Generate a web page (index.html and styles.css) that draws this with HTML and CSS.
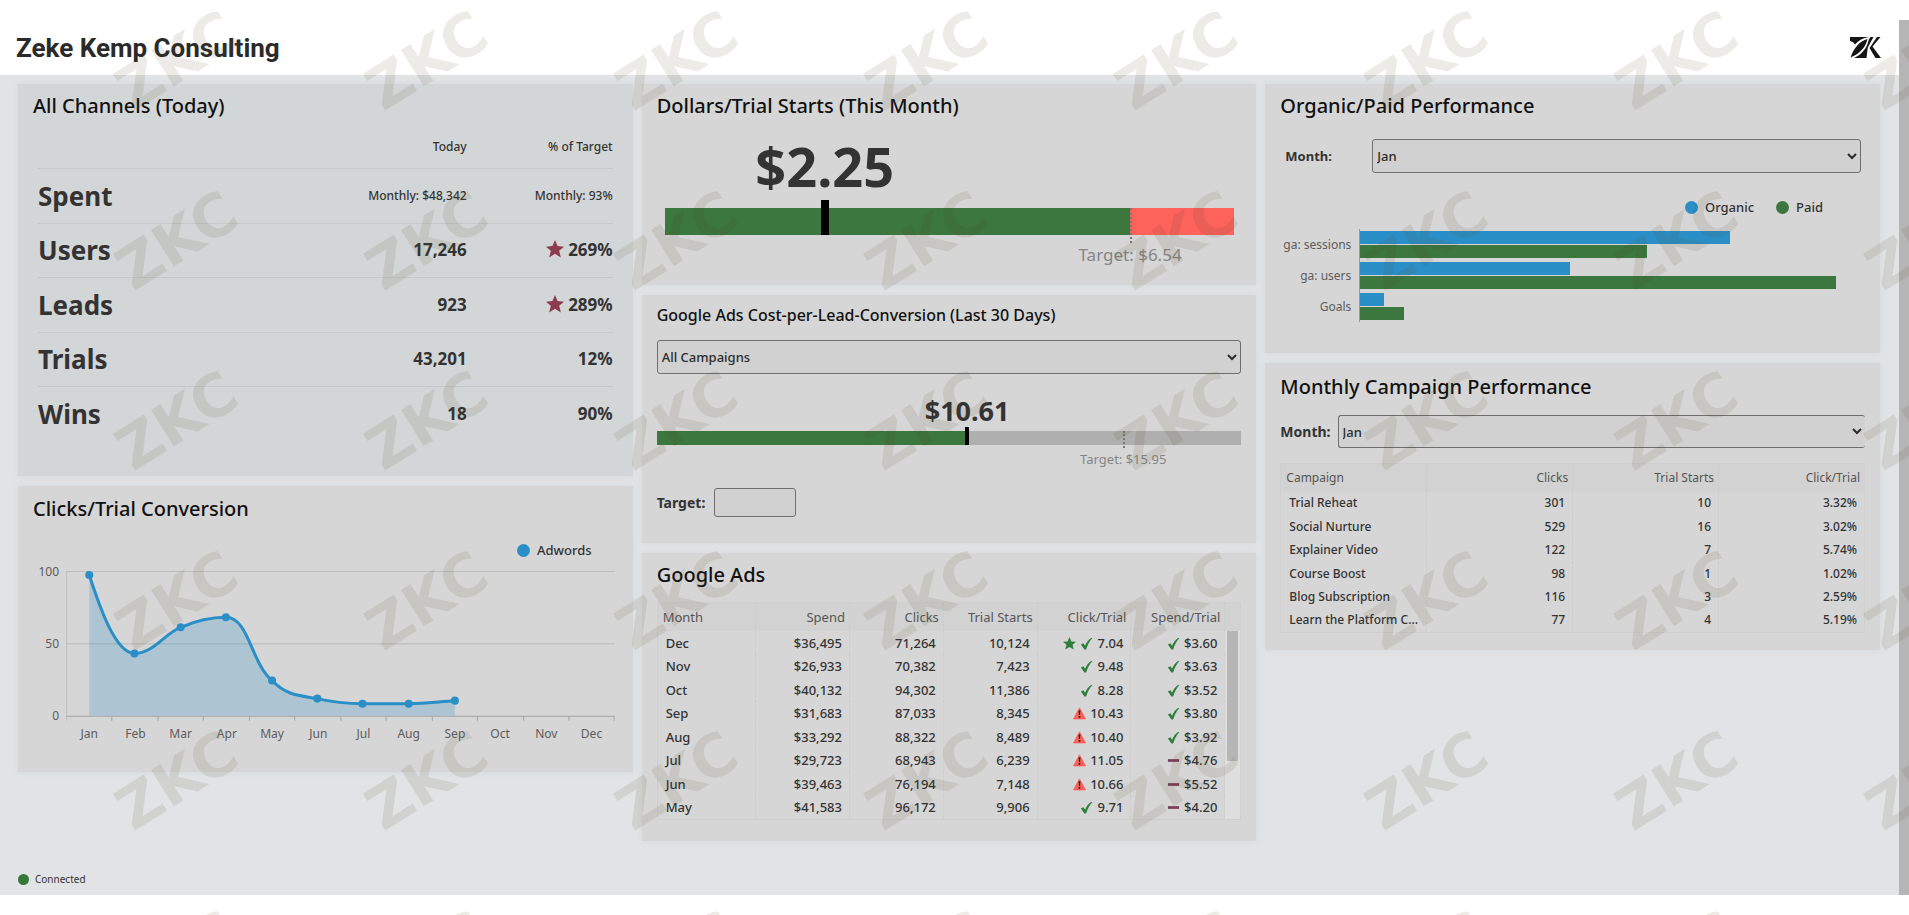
FILE: index.html
```html
<!DOCTYPE html>
<html lang="en">
<head>
  <meta charset="UTF-8" />
  <meta name="viewport" content="width=device-width, initial-scale=1" />
  <title>Zeke Kemp Consulting</title>
  <link rel="stylesheet" href="styles.css">
</head>
<body>

  <!-- shared icons -->
  <svg class="sprite" aria-hidden="true">
    <symbol id="star" viewBox="0 0 16 16">
      <path d="M8 0l2.300 5.400 5.700.5-4.300 3.700 1.500 5.900L8 12.300l-5.200 3.200 1.500-5.900L0 5.900l5.700-.5z"/>
    </symbol>
    <symbol id="check" viewBox="0 0 14 14">
      <path d="M1 8.2l2.6-1.4 1.9 2.6C7 5.600 9.200 2.600 12.400.8l.8.600C10.300 4.600 8.100 8.600 6.600 13.400H4.700z"/>
    </symbol>
    <symbol id="warn" viewBox="0 0 14 14">
      <path d="M7 1L13.400 12.800H.6z" fill="#f8605a" stroke="#f8605a" stroke-linejoin="round"/>
      <path d="M6 3.600h2l-.4 5H6.400zM6.100 9.800h1.800v1.800H6.100z" fill="#3c1c1c"/>
    </symbol>
    <symbol id="dash" viewBox="0 0 14 14">
      <path d="M1 5.500h12v3H1z"/>
    </symbol>
  </svg>

  <header class="topbar">
    <h1>Zeke Kemp Consulting</h1>
    <svg class="logo" viewBox="0 0 31 21" role="img" aria-label="ZK">
      <path d="M0 0h19C13 .8 8.500 3.500 5 7.500 3.800 5.500 2 4.300 0 4z"/>
      <path d="M17.500 2C9.500 4 3.500 11.500 .5 20.500 9 17 15.500 11 17.500 2z"/>
      <path d="M4 21C11.500 17.500 17 11.500 18.800 2.500L20.500 0H23.500L17.800 10.500 16.500 21z"/>
      <path d="M27 0H30.500L22.500 9.500 31 21H25.500L19.500 11z"/>
    </svg>
  </header>

  <main class="board">
    <div class="columns">

      <div class="column">
        <section class="card channels-card">
          <h2>All Channels (Today)</h2>
          <table class="channels">
            <thead>
              <tr><th></th><th>Today</th><th>% of Target</th></tr>
            </thead>
            <tbody>
              <tr class="small"><th>Spent</th><td>Monthly: $48,342</td><td>Monthly: 93%</td></tr>
              <tr><th>Users</th><td>17,246</td><td><svg class="star-red"><use href="#star"/></svg> 269%</td></tr>
              <tr><th>Leads</th><td>923</td><td><svg class="star-red"><use href="#star"/></svg> 289%</td></tr>
              <tr><th>Trials</th><td>43,201</td><td>12%</td></tr>
              <tr><th>Wins</th><td>18</td><td>90%</td></tr>
            </tbody>
          </table>
        </section>

        <section class="card clicks-card">
          <h2>Clicks/Trial Conversion</h2>
          <div class="legend">
            <span class="key blue">Adwords</span>
          </div>
          <svg class="line-chart" viewBox="0 0 582 180">
            <g stroke="#bdbfbf">
              <path d="M33 11.500h546M33 83.500h546M33.500 11v149"/>
            </g>
            <path d="M56 15C66 46 82 93 101 93C120 93 131 73 147 67C161 61 177 57 192 57C215 57 217 103 238 120C252 135 266 135 283 138C300 142 312 143 328 143H374C389 143 404 141 420 140V155H56z" fill="#2a8fc7" fill-opacity=".24"/>
            <path d="M33 155.500h546M78.500 155v5M124.500 155v5M169.500 155v5M215.500 155v5M260.500 155v5M306.500 155v5M351.500 155v5M397.500 155v5M442.500 155v5M488.500 155v5M533.500 155v5M578.500 155v5" stroke="#a2a5a5"/>
            <path d="M56 15C66 46 82 93 101 93C120 93 131 73 147 67C161 61 177 57 192 57C215 57 217 103 238 120C252 135 266 135 283 138C300 142 312 143 328 143H374C389 143 404 141 420 140" fill="none" stroke="#2a8fc7" stroke-width="3"/>
            <g fill="#2a8fc7">
              <circle cx="56" cy="15" r="4"/><circle cx="101" cy="93" r="4"/><circle cx="147" cy="67" r="4"/>
              <circle cx="192" cy="57" r="4"/><circle cx="238" cy="120" r="4"/><circle cx="283" cy="138" r="4"/>
              <circle cx="328" cy="143" r="4"/><circle cx="374" cy="143" r="4"/><circle cx="420" cy="140" r="4"/>
            </g>
            <g class="axis" text-anchor="end">
              <text x="26" y="16">100</text><text x="26" y="88">50</text><text x="26" y="159">0</text>
            </g>
            <g class="axis" text-anchor="middle">
              <text x="56" y="177">Jan</text><text x="102" y="177">Feb</text><text x="147" y="177">Mar</text>
              <text x="193" y="177">Apr</text><text x="238" y="177">May</text><text x="284" y="177">Jun</text>
              <text x="329" y="177">Jul</text><text x="374" y="177">Aug</text><text x="420" y="177">Sep</text>
              <text x="465" y="177">Oct</text><text x="511" y="177">Nov</text><text x="556" y="177">Dec</text>
            </g>
          </svg>
        </section>
      </div>

      <div class="column">
        <section class="card dollars-card">
          <h2>Dollars/Trial Starts (This Month)</h2>
          <div class="gauge big">
            <div class="gauge-value"><span style="left:28.1%">$2.25</span></div>
            <div class="gauge-bar over">
              <div class="fill" style="width:81.7%"></div>
              <div class="marker" style="left:28.1%"></div>
              <div class="goal" style="left:81.7%"></div>
            </div>
            <div class="gauge-target"><span style="left:81.7%">Target: $6.54</span></div>
          </div>
        </section>

        <section class="card cost-card">
          <h3>Google Ads Cost-per-Lead-Conversion (Last 30 Days)</h3>
          <select class="wide" aria-label="Campaign">
            <option>All Campaigns</option>
          </select>
          <div class="gauge">
            <div class="gauge-value"><span style="left:53.1%">$10.61</span></div>
            <div class="gauge-bar">
              <div class="fill" style="width:53.1%"></div>
              <div class="marker" style="left:53.1%"></div>
              <div class="goal" style="left:79.8%"></div>
            </div>
            <div class="gauge-target"><span style="left:79.8%">Target: $15.95</span></div>
          </div>
          <div class="field target-field">
            <label for="target">Target:</label>
            <input type="text" id="target">
          </div>
        </section>

        <section class="card ads-card">
          <h2>Google Ads</h2>
          <div class="table-scroll">
            <table class="data">
              <thead>
                <tr><th>Month</th><th>Spend</th><th>Clicks</th><th>Trial Starts</th><th>Click/Trial</th><th>Spend/Trial</th></tr>
              </thead>
              <tbody>
                <tr><td>Dec</td><td>$36,495</td><td>71,264</td><td>10,124</td><td><svg class="good"><use href="#star"/></svg> <svg class="good"><use href="#check"/></svg> 7.04</td><td><svg class="good"><use href="#check"/></svg> $3.60</td></tr>
                <tr><td>Nov</td><td>$26,933</td><td>70,382</td><td>7,423</td><td><svg class="good"><use href="#check"/></svg> 9.48</td><td><svg class="good"><use href="#check"/></svg> $3.63</td></tr>
                <tr><td>Oct</td><td>$40,132</td><td>94,302</td><td>11,386</td><td><svg class="good"><use href="#check"/></svg> 8.28</td><td><svg class="good"><use href="#check"/></svg> $3.52</td></tr>
                <tr><td>Sep</td><td>$31,683</td><td>87,033</td><td>8,345</td><td><svg><use href="#warn"/></svg> 10.43</td><td><svg class="good"><use href="#check"/></svg> $3.80</td></tr>
                <tr><td>Aug</td><td>$33,292</td><td>88,322</td><td>8,489</td><td><svg><use href="#warn"/></svg> 10.40</td><td><svg class="good"><use href="#check"/></svg> $3.92</td></tr>
                <tr><td>Jul</td><td>$29,723</td><td>68,943</td><td>6,239</td><td><svg><use href="#warn"/></svg> 11.05</td><td><svg class="flat"><use href="#dash"/></svg> $4.76</td></tr>
                <tr><td>Jun</td><td>$39,463</td><td>76,194</td><td>7,148</td><td><svg><use href="#warn"/></svg> 10.66</td><td><svg class="flat"><use href="#dash"/></svg> $5.52</td></tr>
                <tr><td>May</td><td>$41,583</td><td>96,172</td><td>9,906</td><td><svg class="good"><use href="#check"/></svg> 9.71</td><td><svg class="flat"><use href="#dash"/></svg> $4.20</td></tr>
              </tbody>
            </table>
            <div class="scroll-track"><div class="scroll-thumb"></div></div>
          </div>
        </section>
      </div>

      <div class="column">
        <section class="card organic-card">
          <h2>Organic/Paid Performance</h2>
          <div class="field organic-field">
            <label for="organicMonth">Month:</label>
            <select id="organicMonth">
              <option>Jan</option>
            </select>
          </div>
          <div class="legend">
            <span class="key blue">Organic</span>
            <span class="key green">Paid</span>
          </div>
          <div class="bars">
            <div class="bar-label">ga: sessions</div>
            <div class="bar-pair">
              <div class="bar blue" style="width:73.8%"></div>
              <div class="bar green" style="width:57.2%"></div>
            </div>
            <div class="bar-label">ga: users</div>
            <div class="bar-pair">
              <div class="bar blue" style="width:41.8%"></div>
              <div class="bar green" style="width:95%"></div>
            </div>
            <div class="bar-label">Goals</div>
            <div class="bar-pair">
              <div class="bar blue" style="width:4.8%"></div>
              <div class="bar green" style="width:8.7%"></div>
            </div>
          </div>
        </section>

        <section class="card campaign-card">
          <h2>Monthly Campaign Performance</h2>
          <div class="field campaign-field">
            <label for="campaignMonth">Month:</label>
            <select id="campaignMonth">
              <option>Jan</option>
            </select>
          </div>
          <table class="data">
            <thead>
              <tr><th>Campaign</th><th>Clicks</th><th>Trial Starts</th><th>Click/Trial</th></tr>
            </thead>
            <tbody>
              <tr><td>Trial Reheat</td><td>301</td><td>10</td><td>3.32%</td></tr>
              <tr><td>Social Nurture</td><td>529</td><td>16</td><td>3.02%</td></tr>
              <tr><td>Explainer Video</td><td>122</td><td>7</td><td>5.74%</td></tr>
              <tr><td>Course Boost</td><td>98</td><td>1</td><td>1.02%</td></tr>
              <tr><td>Blog Subscription</td><td>116</td><td>3</td><td>2.59%</td></tr>
              <tr><td>Learn the Platform C...</td><td>77</td><td>4</td><td>5.19%</td></tr>
            </tbody>
          </table>
        </section>
      </div>
    </div>

    <footer class="status">Connected</footer>
  </main>

  <div class="page-scroll"></div>

  <!-- repeating watermark -->
  <svg class="watermark" aria-hidden="true">
    <defs>
      <pattern id="zkc" width="250" height="180" patternUnits="userSpaceOnUse">
        <text transform="translate(133 112) rotate(-32)">ZKC</text>
      </pattern>
    </defs>
    <rect width="100%" height="100%" fill="url(#zkc)"/>
  </svg>

</body>
</html>
```
FILE: styles.css
```css
* {
  box-sizing: border-box;
}

body {
  margin: 0;
  padding: 20px 10px 20px 0;
  min-height: 100vh;
  display: flex;
  flex-direction: column;
  background: #fff;
  color: #333;
  font-family: "Noto Sans", "Open Sans", sans-serif;
  font-size: 13px;
  line-height: 20px;
  overflow: hidden;
}

.sprite {
  position: absolute;
  width: 0;
  height: 0;
}

.topbar {
  display: flex;
  align-items: center;
  justify-content: space-between;
  height: 55px;
  padding: 0 18px 0 16px;
}

h1 {
  margin: 0;
  font-family: Roboto, sans-serif;
  font-size: 26px;
  line-height: 32px;
  font-weight: 700;
  color: #2a2a2a;
}

.logo {
  width: 31px;
  height: 21px;
  fill: #161616;
}

.board {
  flex: 1;
  display: flex;
  flex-direction: column;
  justify-content: space-between;
  padding: 9px 19px 6px 18px;
  background: #e1e3e5;
}

.columns {
  display: grid;
  grid-template-columns: repeat(3, minmax(0, 1fr));
  gap: 9px;
  align-items: start;
}

.column {
  display: flex;
  flex-direction: column;
  gap: 10px;
}

.card {
  padding: 8px 15px;
  background: #d6d6d6;
  box-shadow: 0 0 4px rgb(204 207 209 / 0.5);
}

.channels-card {
  padding-bottom: 35px;
  background: #d3d6d7;
}

.clicks-card {
  padding-top: 9px;
  padding-bottom: 31px;
}

.dollars-card {
  padding-bottom: 20px;
}

.cost-card {
  padding-bottom: 26px;
}

.ads-card {
  padding-bottom: 21px;
}

.organic-card {
  padding-bottom: 31px;
}

.campaign-card {
  padding-top: 10px;
  padding-bottom: 17px;
}

h2 {
  margin: 0;
  font-size: 20px;
  line-height: 28px;
  font-weight: 500;
  color: #111;
}

h3 {
  margin: 0;
  font-size: 16px;
  line-height: 24px;
  font-weight: 500;
  color: #111;
}

/* all channels */
.channels {
  width: calc(100% - 10px);
  margin-left: 5px;
  border-collapse: collapse;
  table-layout: fixed;
}

.channels th,
.channels td {
  height: 55px;
  padding: 0;
  text-align: right;
  font-size: 17px;
  font-weight: 700;
  border-bottom: 1px solid #c6c9ca;
}

.channels tbody tr:nth-child(even) td,
.channels tbody tr:nth-child(even) th {
  height: 54px;
}

.channels thead th {
  height: 48px;
  padding-top: 6px;
  font-size: 12px;
  font-weight: 500;
}

.channels th:last-child,
.channels td:last-child {
  width: 146px;
}

.channels tbody th {
  text-align: left;
  font-size: 26px;
}

.channels .small td {
  font-size: 12px;
  font-weight: 500;
}

.channels tbody tr:last-child th,
.channels tbody tr:last-child td {
  border-bottom: none;
}

.star-red {
  width: 18px;
  height: 18px;
  vertical-align: -2px;
  fill: #8c3c4e;
}

/* legends and charts */
.legend {
  display: flex;
  justify-content: flex-end;
  gap: 22px;
  font-weight: 500;
}

.key {
  display: flex;
  align-items: center;
  gap: 7px;
}

.key::before {
  content: "";
  width: 13px;
  height: 13px;
  border-radius: 50%;
}

.key.blue::before,
.bar.blue {
  background: #2a8fc7;
}

.key.green::before,
.bar.green {
  background: #3b773f;
}

.clicks-card .legend {
  margin: 17px 26px 0 0;
}

.line-chart {
  display: block;
  width: 100%;
}

.axis {
  font-size: 12px;
  fill: #5c5c5c;
}

/* gauges */
.gauge-value,
.gauge-target {
  position: relative;
}

.gauge-value span,
.gauge-target span {
  position: absolute;
  transform: translateX(-50%);
  white-space: nowrap;
}

.gauge-value {
  height: 57px;
  font-size: 27px;
  line-height: 36px;
  font-weight: 700;
}

.gauge-value span {
  bottom: 2px;
}

.gauge-bar {
  position: relative;
  height: 14px;
  background: #afafaf;
}

.gauge-bar.over {
  background: #fd625b;
}

.fill {
  height: 100%;
  background: #3b773f;
}

.marker {
  position: absolute;
  top: -4px;
  bottom: 0;
  width: 4px;
  background: #000;
  transform: translateX(-50%);
}

.goal {
  position: absolute;
  top: 0;
  bottom: -3px;
  border-left: 2px dotted #777;
}

.gauge-target {
  height: 43px;
  color: #858585;
}

.gauge-target span {
  top: 4px;
}

.gauge.big {
  margin: 0 7px 0 8px;
}

.big .gauge-value {
  height: 88px;
  font-size: 54px;
  line-height: 60px;
}

.big .gauge-value span {
  bottom: 12px;
}

.big .gauge-bar {
  height: 27px;
}

.big .marker {
  top: -8px;
  width: 8px;
}

.big .goal {
  bottom: -8px;
}

.big .gauge-target {
  height: 30px;
  font-size: 17px;
}

.big .gauge-target span {
  top: 10px;
}

/* form fields */
select,
input {
  height: 34px;
  margin: 0;
  padding: 0;
  border: 1px solid #6e6e6e;
  border-radius: 3px;
  background-color: #d1d1d1;
  color: #2c2c2c;
  font-family: inherit;
  font-size: 13px;
  font-weight: 500;
}

select.wide {
  display: block;
  width: 100%;
  margin-top: 13px;
}

.field {
  display: flex;
  align-items: center;
}

.field select {
  flex: 1;
}

label {
  font-size: 14px;
  font-weight: 700;
}

.target-field {
  gap: 9px;
}

.target-field input {
  width: 82px;
  height: 29px;
}

.organic-field {
  margin: 19px 4px 0 5px;
}

.organic-field label {
  width: 87px;
  font-size: 13px;
}

.campaign-field {
  gap: 7px;
  margin-top: 14px;
}

.campaign-field select {
  height: 33px;
  border-right: none;
}

/* organic/paid bars */
.organic-card .legend {
  margin: 24px 42px 0 0;
}

.bars {
  display: grid;
  grid-template-columns: 71px 1fr;
  column-gap: 8px;
  margin: 12px 4px 0 0;
}

.bar-label {
  align-self: center;
  text-align: right;
  font-size: 12px;
  white-space: nowrap;
  color: #5c5c5c;
}

.bar-pair {
  display: flex;
  flex-direction: column;
  gap: 1px;
  padding: 2px 0;
  border-left: 1px solid #999;
}

.bar {
  height: 13px;
}

/* data tables */
.data {
  width: 100%;
  border-collapse: collapse;
  table-layout: fixed;
  border: 1px solid #cfcfcf;
}

.data th,
.data td {
  height: 23px;
  padding: 0 7px 0 8px;
  text-align: right;
  font-weight: 500;
  white-space: nowrap;
  border-right: 1px dotted #cbcbcb;
}

.data tbody tr:nth-child(even) td {
  height: 24px;
}

.data th {
  height: 28px;
  padding: 0 4px 0 5px;
  font-weight: 400;
  color: #555;
  background: #d2d2d2;
}

.data th:first-child,
.data td:first-child {
  text-align: left;
}

.data svg {
  width: 13px;
  height: 13px;
  margin-right: 1px;
  vertical-align: -2px;
}

.good {
  fill: #2e7f3c;
}

.flat {
  fill: #7c3f5c;
}

.campaign-card .data {
  margin-top: 15px;
  font-size: 12px;
}

.table-scroll {
  position: relative;
  margin-top: 13px;
  padding-right: 15px;
  border: 1px solid #cfcfcf;
  background: #d2d2d2;
}

.table-scroll .data {
  border: none;
  background: #d6d6d6;
}

.table-scroll th:first-child {
  width: 98px;
}

.scroll-track {
  position: absolute;
  top: 28px;
  right: 0;
  bottom: 0;
  width: 15px;
  padding: 0 2px;
  background: #dedede;
}

.scroll-thumb {
  height: 69%;
  background: #b6b6b6;
}

.status {
  display: flex;
  align-items: center;
  gap: 6px;
  font-size: 10px;
}

.status::before {
  content: "";
  width: 11px;
  height: 11px;
  border-radius: 50%;
  background: #34783a;
}

.page-scroll {
  position: absolute;
  top: 20px;
  right: 0;
  bottom: 20px;
  width: 10px;
  background: #b5b5b5;
}

.watermark {
  position: fixed;
  inset: 0;
  width: 100%;
  height: 100%;
  pointer-events: none;
}

.watermark text {
  font-family: "DejaVu Sans", sans-serif;
  font-size: 59px;
  font-weight: 700;
  fill: rgb(80 72 40 / 0.11);
}
```
